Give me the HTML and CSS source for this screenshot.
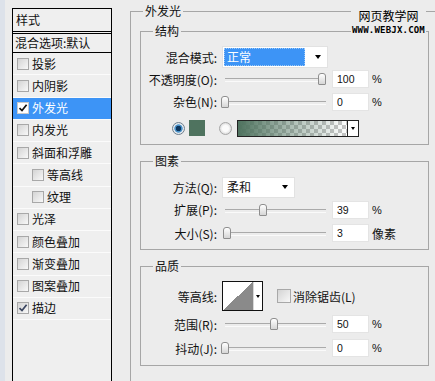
FILE: index.html
```html
<!DOCTYPE html>
<html lang="zh-CN">
<head>
  <meta charset="UTF-8" />
  <title>图层样式 - 外发光</title>
  <link rel="stylesheet" href="styles.css">
</head>
<body>
  <div class="dialog">
    <div class="sidebar">
      <ul class="style-list">
        <li class="head">样式</li>
        <li class="blend">混合选项:默认</li>
        <li><span class="check"></span>投影</li>
        <li><span class="check"></span>内阴影</li>
        <li class="active"><span class="check"><svg viewBox="0 0 10 10"><path d="M1.5 5.2 L4 7.6 L8.6 1.8" /></svg></span>外发光</li>
        <li><span class="check"></span>内发光</li>
        <li><span class="check"></span>斜面和浮雕</li>
        <li class="sub"><span class="check"></span>等高线</li>
        <li class="sub"><span class="check"></span>纹理</li>
        <li><span class="check"></span>光泽</li>
        <li><span class="check"></span>颜色叠加</li>
        <li><span class="check"></span>渐变叠加</li>
        <li><span class="check"></span>图案叠加</li>
        <li><span class="check checked"><svg viewBox="0 0 10 10"><path d="M1.5 5.2 L4 7.6 L8.6 1.8" /></svg></span>描边</li>
      </ul>
    </div>

    <div class="main">
      <fieldset class="frame">
        <legend>外发光</legend>

        <fieldset class="group structure">
          <legend>结构</legend>
          <div class="row">
            <label class="lbl">混合模式:</label>
            <div class="select mode">
              <span class="sel-text">正常</span>
              <span class="arrow"></span>
            </div>
          </div>
          <div class="row">
            <label class="lbl">不透明度(O):</label>
            <div class="slider" style="--p: 100"><span class="thumb"></span></div>
            <input class="num" type="text" value="100">
            <span class="unit">%</span>
          </div>
          <div class="row r23">
            <label class="lbl">杂色(N):</label>
            <div class="slider" style="--p: 0"><span class="thumb"></span></div>
            <input class="num" type="text" value="0">
            <span class="unit">%</span>
          </div>
          <div class="row color-row">
            <span class="radio on"></span>
            <span class="swatch"></span>
            <span class="radio off"></span>
            <div class="gradient">
              <span class="ramp"></span>
              <span class="drop"><span class="arrow sm"></span></span>
            </div>
          </div>
        </fieldset>

        <fieldset class="group elements">
          <legend>图素</legend>
          <div class="row">
            <label class="lbl">方法(Q):</label>
            <div class="select method">
              <span class="sel-text">柔和</span>
              <span class="arrow"></span>
            </div>
          </div>
          <div class="row r23">
            <label class="lbl">扩展(P):</label>
            <div class="slider" style="--p: 39"><span class="thumb"></span></div>
            <input class="num" type="text" value="39">
            <span class="unit">%</span>
          </div>
          <div class="row r24">
            <label class="lbl">大小(S):</label>
            <div class="slider" style="--p: 2.5"><span class="thumb"></span></div>
            <input class="num" type="text" value="3">
            <span class="unit cjk">像素</span>
          </div>
        </fieldset>

        <fieldset class="group quality">
          <legend>品质</legend>
          <div class="row r32">
            <label class="lbl">等高线:</label>
            <div class="contour">
              <span class="curve"></span>
              <span class="drop"><span class="arrow sm"></span></span>
            </div>
            <span class="check big"></span>
            <span class="check-text">消除锯齿(L)</span>
          </div>
          <div class="row r24">
            <label class="lbl">范围(R):</label>
            <div class="slider" style="--p: 50"><span class="thumb"></span></div>
            <input class="num" type="text" value="50">
            <span class="unit">%</span>
          </div>
          <div class="row r24">
            <label class="lbl">抖动(J):</label>
            <div class="slider" style="--p: 0"><span class="thumb"></span></div>
            <input class="num" type="text" value="0">
            <span class="unit">%</span>
          </div>
        </fieldset>
      </fieldset>
    </div>

    <div class="watermark">
      <span class="cn">网页教学网</span>
      <span class="url">WWW.WEBJX.COM</span>
    </div>
  </div>
</body>
</html>
```

FILE: styles.css
```css
* {
  box-sizing: border-box;
}
body {
  margin: 0;
  width: 435px;
  height: 381px;
  overflow: hidden;
  background: #ececec;
  color: #111;
  font-family: "Noto Sans CJK SC", "Liberation Sans", sans-serif;
  font-size: 12px;
}
.dialog {
  position: relative;
  display: flex;
  height: 100%;
  overflow: hidden;
}

/* left style list */
.sidebar {
  flex: none;
  width: 130px;
  height: 100%;
  padding: 8px 0 0 12px;
  background: linear-gradient(to right, #dde2ea 0, #dde2ea 5px, #ececec 5px);
}
.style-list {
  list-style: none;
  margin: 0;
  padding: 0;
  width: 100px;
  height: 100%;
  border: 1px solid #000;
  border-bottom: none;
  background: #efefef;
}
.style-list li {
  display: flex;
  align-items: center;
  gap: 3px;
  height: 22.25px;
  padding-left: 4px;
  border-bottom: 1px solid #fbfbfb;
  white-space: nowrap;
  line-height: 1;
}
.style-list li.head {
  height: 25px;
  padding-left: 3px;
  border-bottom: 3px double #000;
}
.style-list li.blend {
  height: 19px;
  padding-left: 2px;
  border-bottom: 1px solid #000;
}
.style-list li.sub {
  padding-left: 19px;
}
.style-list li.active {
  background: #3d94f6;
  color: #fff;
}
.check {
  flex: none;
  display: flex;
  align-items: center;
  justify-content: center;
  width: 12px;
  height: 12px;
  border: 1px solid #a8a8a8;
  background: linear-gradient(135deg, #d4d4d4, #f8f8f8);
}
.check svg {
  width: 10px;
  height: 10px;
}
.check path {
  fill: none;
  stroke: #111;
  stroke-width: 1.7;
}
.active .check {
  background: #fff;
  border-color: #c9c9c9;
}
.check.checked path {
  stroke: #3a4560;
}

/* right panel */
.main {
  flex: 1;
  min-width: 0;
  height: 100%;
  padding-top: 3px;
}
fieldset {
  min-width: 0;
  margin: 0;
  padding: 0;
  border: 1px solid #a6a6a6;
}
legend {
  padding: 0 2px;
  line-height: 16px;
}
.frame {
  height: 100%;
  padding-left: 9px;
  border-right: none;
  border-bottom: none;
}
.frame > legend {
  margin-left: 3px;
}
.group {
  width: 289px;
}
.group > legend {
  margin-left: 12px;
}
.structure {
  margin-top: 4px;
  padding: 7px 0 5px;
}
.elements {
  margin-top: 8px;
  padding: 7px 0 4px;
}
.quality {
  margin-top: 8px;
  padding: 6px 0 5px;
}

.row {
  display: flex;
  align-items: center;
  height: 22px;
}
.row.r23 { height: 23px; }
.row.r24 { height: 24px; }
.row.r32 { height: 32px; }
.lbl {
  flex: none;
  width: 76px;
  margin-right: 5px;
  text-align: right;
  white-space: nowrap;
}

.select {
  display: flex;
  align-items: center;
  height: 22px;
  padding: 1px;
  background: #fff;
  border: 1px solid #e2e2e2;
}
.select.mode {
  width: 106px;
}
.select.method {
  width: 73px;
  height: 21px;
}
.sel-text {
  height: 18px;
  line-height: 17px;
  padding-left: 3px;
}
.mode .sel-text {
  width: 81px;
  background: #3d94f6;
  color: #fff;
  outline: 1px dotted #9cc8f6;
  outline-offset: -1px;
}
.select .arrow {
  margin-left: auto;
  margin-right: 5px;
}
.arrow {
  width: 0;
  height: 0;
  border-left: 3.5px solid transparent;
  border-right: 3.5px solid transparent;
  border-top: 4px solid #000;
}
.arrow.sm {
  border-left-width: 2.5px;
  border-right-width: 2.5px;
  border-top-width: 3px;
}

.slider {
  position: relative;
  flex: none;
  width: 104px;
  height: 14px;
}
.slider::before {
  content: "";
  position: absolute;
  left: 3px;
  right: 0;
  top: 6px;
  height: 2px;
  border-top: 1px solid #aaa;
  border-bottom: 1px solid #fafafa;
}
.thumb {
  position: absolute;
  top: 1px;
  left: calc(var(--p) * 0.97px - 1px);
  width: 8px;
  height: 12px;
  border: 1px solid #8e8e8e;
  border-radius: 3px 3px 1px 1px;
  background: linear-gradient(#fff, #d6d6d6);
}
.num {
  width: 37px;
  height: 18px;
  margin: 0 0 0 6px;
  padding: 0 0 0 4px;
  border: 1px solid #e4e4e4;
  background: #fff;
  color: #111;
  font: 10.5px "Liberation Sans", sans-serif;
}
.unit {
  margin-left: 3px;
  font: 11px "Liberation Sans", sans-serif;
}
.unit.cjk {
  font: 12px "Noto Sans CJK SC", sans-serif;
}

/* color choice */
.color-row {
  margin-top: 4px;
  padding-left: 31px;
}
.radio {
  flex: none;
  width: 13px;
  height: 13px;
  border-radius: 50%;
}
.radio.on {
  border: 1px solid #6f7f8c;
  background: radial-gradient(circle, #0c355c 0, #0c355c 2.5px, #4b92c9 3px, #4b92c9 3.8px, #e3e9ee 4.5px);
}
.radio.off {
  margin-left: 14px;
  border: 1px solid #a7a7a7;
  background: radial-gradient(circle, #fbfbfb 0, #fbfbfb 3px, #d9d9d9 6px);
}
.swatch {
  flex: none;
  width: 16px;
  height: 16px;
  margin-left: 4px;
  background: #4f735f;
}
.gradient {
  display: flex;
  width: 122px;
  height: 17px;
  margin-left: 5px;
  border: 1px solid #222;
}
.gradient .ramp {
  flex: 1;
  background:
    linear-gradient(to right, #4f735f, rgba(79, 115, 95, 0.5) 45%, rgba(79, 115, 95, 0)),
    repeating-conic-gradient(#c6c6c6 0 25%, #fff 0 50%) 0 0 / 8px 8px;
}
.drop {
  display: flex;
  align-items: center;
  justify-content: center;
  background: #fff;
}
.gradient .drop {
  width: 11px;
  border-left: 1px solid #222;
}

/* contour */
.contour {
  display: flex;
  width: 41px;
  height: 30px;
  border: 1px solid #111;
}
.contour .curve {
  width: 30px;
  background: linear-gradient(to top left, #8a8a8a 50%, #fff 50%);
}
.contour .drop {
  flex: 1;
  border-left: 1px solid #d8d8d8;
}
.check.big {
  width: 14px;
  height: 14px;
  margin-left: 14px;
}
.check-text {
  margin-left: 2px;
  white-space: nowrap;
}

/* site mark */
.watermark {
  position: absolute;
  top: 7px;
  right: 9px;
  padding: 0 1px;
  background: #ececec;
  text-align: center;
}
.watermark .cn {
  display: block;
  font-size: 12px;
  line-height: 17px;
  color: #000;
}
.watermark .url {
  display: block;
  margin-top: 2px;
  font: bold 9px "DejaVu Sans Mono", monospace;
  letter-spacing: 0.2px;
  line-height: 9px;
  color: #000;
}
```
